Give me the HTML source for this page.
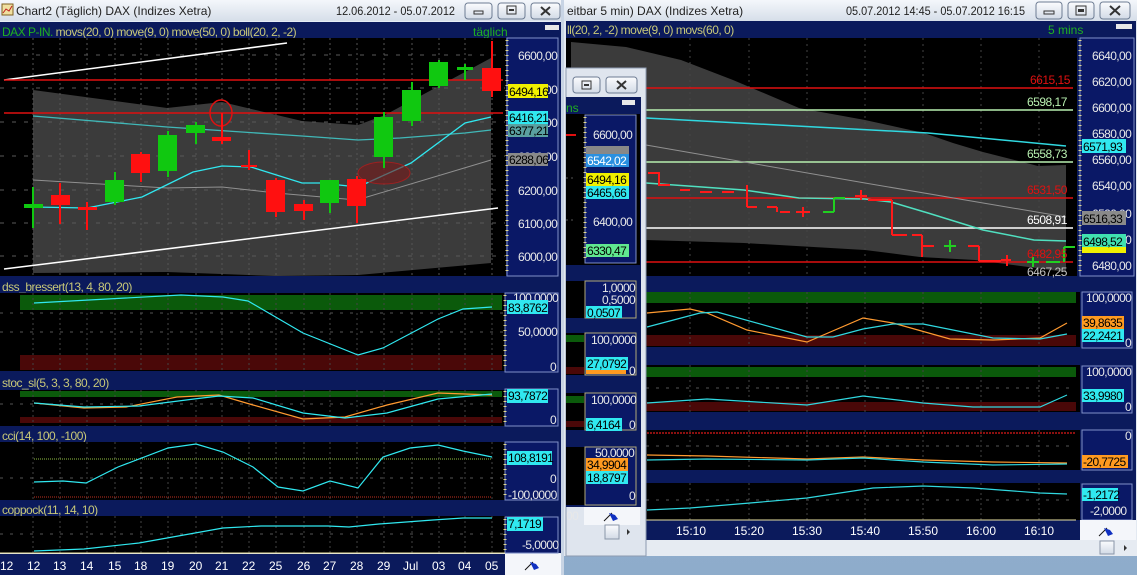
<!DOCTYPE html>
<html><head><meta charset="utf-8"><style>
html,body{margin:0;padding:0;background:#9ab6d4;overflow:hidden}
svg{display:block;font-family:"Liberation Sans",sans-serif}
.ax{font-size:12px;fill:#e8e8e8;letter-spacing:-0.6px}
.bx{font-size:12px;fill:#000;letter-spacing:-0.6px}
.hd{font-size:12px;fill:#c8c878;letter-spacing:-0.5px}
.tt{font-size:12px;fill:#222}
.dt{font-size:12px;fill:#fff}
</style></head><body>
<svg width="1137" height="575" viewBox="0 0 1137 575">
<defs>
<linearGradient id="tb" x1="0" y1="0" x2="0" y2="1"><stop offset="0" stop-color="#f4f7fb"/><stop offset="1" stop-color="#d6dee9"/></linearGradient>
<linearGradient id="bt" x1="0" y1="0" x2="0" y2="1"><stop offset="0" stop-color="#fbfcfe"/><stop offset="1" stop-color="#d2dae6"/></linearGradient>
<linearGradient id="dk" x1="0" y1="0" x2="0" y2="1"><stop offset="0" stop-color="#a8c0da"/><stop offset="1" stop-color="#8eaccb"/></linearGradient>
</defs>
<rect width="1137" height="575" fill="url(#dk)"/>

<!-- ================= RIGHT WINDOW ================= -->
<rect x="563" y="0" width="574" height="556" fill="#e3e9f1"/>
<rect x="563" y="0" width="574" height="21" fill="url(#tb)"/>
<text x="567" y="15" class="tt">eitbar 5 min)  DAX (Indizes Xetra)</text>
<text x="846" y="15" class="tt" textLength="179" lengthAdjust="spacingAndGlyphs">05.07.2012 14:45 - 05.07.2012 16:15</text>
<g stroke="#6d7c93" fill="url(#bt)"><rect x="1036" y="2" width="26" height="17" rx="3"/><rect x="1068" y="2" width="26" height="17" rx="3"/><rect x="1100" y="2" width="30" height="17" rx="3"/></g>
<rect x="1044" y="11" width="10" height="3" fill="none" stroke="#333"/>
<rect x="1076" y="6" width="10" height="9" fill="none" stroke="#333"/><rect x="1078" y="9" width="6" height="3" fill="#333"/>
<path d="M1110 6l10 9M1120 6l-10 9" stroke="#333" stroke-width="2"/>
<rect x="566" y="21" width="570" height="519" fill="#0b1a5c"/>
<text x="567" y="34" class="hd">ll(20, 2, -2) move(9, 0) movs(60, 0)</text>
<text x="1048" y="34" font-size="12" fill="#20b020">5 mins</text>
<rect x="1116" y="24" width="16" height="5" fill="#e8e8e8"/>
<!-- main chart -->
<rect x="566" y="38" width="511" height="238" fill="#000"/>
<path d="M571 42L626 47L681 60L733 80L799 108L865 120L924 133L953 143L983 152L1038 166L1066 165L1066 272L975 260L920 257L865 250L744 243L646 240L571 238Z" fill="#3b3b3b"/>
<g stroke="#444" stroke-dasharray="2,4"><path d="M690 38v238M749 38v238M807 38v238M865 38v238M923 38v238M981 38v238M1039 38v238"/></g>
<path d="M646 88H1073" stroke="#e01010" stroke-width="1.5"/>
<path d="M646 110H1073" stroke="#b8f0b0" stroke-width="1.5"/>
<path d="M646 162H1073" stroke="#b8f0b0" stroke-width="1.5"/>
<path d="M646 198H1073" stroke="#e01010" stroke-width="1.5"/>
<path d="M646 228H1073" stroke="#fff" stroke-width="1.5"/>
<path d="M646 262H1073" stroke="#e01010" stroke-width="1.5"/>
<polyline points="646,118 928,133 1066,146" fill="none" stroke="#30d8e0" stroke-width="1.5"/>
<polyline points="646,145 865,183 1066,217" fill="none" stroke="#909090" stroke-width="1"/>
<polyline points="646,183 744,190 799,198 865,199 891,202 928,213 983,230 1034,240 1066,241" fill="none" stroke="#50e0c0" stroke-width="1.5"/>
<g fill="none" stroke="#ff1a1a" stroke-width="2">
<polyline points="648,173 659,173 659,185 670,185"/><path d="M680 190h10M700 192h12M722 192h12M747 185v22M747 207h10M767 207h10M777 207v5M780 212h10M796 212h14M803 207v10"/>
<path d="M861 190v10M855 196h12M868 200h24M892 200v35M892 235h15M912 235h10M922 235v22M922 246h12M968 246h11M979 246v15M979 261h22M1007 255v11M1001 260h10"/></g>
<g fill="none" stroke="#20d020" stroke-width="2"><path d="M823 212h11M834 212v-14M834 198h11M950 240v12M944 246h12M1027 262h12M1046 262h14M1064 262v-15M1064 247h11M1033 257v10"/></g>
<g font-size="12" letter-spacing="-0.5">
<text x="1030" y="84" fill="#e01010">6615,15</text>
<text x="1027" y="106" fill="#b8f0b0">6598,17</text>
<text x="1027" y="158" fill="#b8f0b0">6558,73</text>
<text x="1027" y="194" fill="#e01010">6531,50</text>
<text x="1027" y="224" fill="#fff">6508,91</text>
<text x="1027" y="258" fill="#e01010">6482,95</text>
<text x="1027" y="276" fill="#c0c0c0">6467,25</text></g>
<!-- right axis -->
<rect x="1080" y="38" width="54" height="238" fill="#0a1866" stroke="#8090c8"/>
<path d="M1080 40V274" stroke="#e0d890" stroke-width="3" stroke-dasharray="1,4"/>
<text x="1092" y="60" class="ax">6640,00</text><text x="1092" y="86" class="ax">6620,00</text><text x="1092" y="112" class="ax">6600,00</text>
<text x="1092" y="138" class="ax">6580,00</text><text x="1092" y="164" class="ax">6560,00</text><text x="1092" y="190" class="ax">6540,00</text>
<text x="1092" y="270" class="ax">6480,00</text><text x="1092" y="244" class="ax">6500,00</text><text x="1092" y="218" class="ax">6520,00</text>
<rect x="1082" y="139" width="44" height="14" fill="#30e8f0"/><text x="1083" y="151" class="bx">6571,93</text>
<rect x="1082" y="211" width="44" height="14" fill="#8a8a8a"/><text x="1083" y="223" class="bx">6516,33</text>
<rect x="1082" y="243" width="44" height="10" fill="#f0f000"/>
<rect x="1082" y="234" width="44" height="13" fill="#40e0b0"/><text x="1083" y="246" class="bx">6498,52</text>

<!-- right lower panels -->
<rect x="566" y="292" width="514" height="55" fill="#000"/>
<rect x="566" y="292" width="510" height="11" fill="#0b5a0b"/><rect x="566" y="335" width="510" height="11" fill="#4a0808"/>
<rect x="566" y="365" width="514" height="47" fill="#000"/>
<rect x="566" y="367" width="510" height="10" fill="#0b5a0b"/><rect x="566" y="402" width="510" height="9" fill="#4a0808"/>
<rect x="566" y="430" width="514" height="40" fill="#000"/>
<path d="M566 433H1076" stroke="#8a1010" stroke-width="2" stroke-dasharray="2,1"/>
<rect x="566" y="483" width="514" height="37" fill="#000"/>
<g stroke="#444" stroke-dasharray="2,3"><path d="M690 292v55M749 292v55M807 292v55M865 292v55M923 292v55M981 292v55M1039 292v55M690 365v47M749 365v47M807 365v47M865 365v47M923 365v47M981 365v47M1039 365v47M690 430v40M749 430v40M807 430v40M865 430v40M923 430v40M981 430v40M1039 430v40M690 483v37M749 483v37M807 483v37M865 483v37M923 483v37M981 483v37M1039 483v37"/></g>
<path d="M566 388H1076M566 446H1076M566 500H1076" stroke="#555" stroke-dasharray="3,7"/>
<polyline points="647,313 690,309 707,313 747,330 807,342 863,318 893,323 950,339 993,340 1040,338 1067,323" fill="none" stroke="#ff9a30" stroke-width="1.2"/>
<polyline points="647,327 700,313 717,312 807,337 833,337 863,329 893,324 923,324 993,338 1040,339 1067,334" fill="none" stroke="#30d8e0" stroke-width="1.2"/>
<polyline points="647,403 707,399 807,405 863,396 923,403 973,407 1040,407 1067,395" fill="none" stroke="#30d8e0" stroke-width="1.2"/>
<polyline points="647,455 707,456 807,459 863,457 923,460 993,462 1067,463" fill="none" stroke="#ff9a30" stroke-width="1.2"/>
<polyline points="647,460 707,459 807,460 863,458 923,462 993,465 1067,464" fill="none" stroke="#30d8e0" stroke-width="1.2"/>
<polyline points="647,510 690,508 750,503 807,498 873,488 923,486 973,488 1040,493 1067,494" fill="none" stroke="#30d8e0" stroke-width="1.2"/>
<g fill="#0a1866" stroke="#8090c8"><rect x="1082" y="292" width="50" height="56"/><rect x="1082" y="366" width="50" height="47"/><rect x="1082" y="430" width="50" height="40"/><rect x="1082" y="484" width="50" height="36"/></g>
<text x="1086" y="302" class="ax">100,0000</text><text x="1125" y="347" class="ax">0</text>
<rect x="1082" y="316" width="42" height="13" fill="#ff9a20"/><text x="1083" y="327" class="bx">39,8635</text>
<rect x="1082" y="329" width="42" height="13" fill="#30e8f0"/><text x="1083" y="340" class="bx">22,2421</text>
<text x="1086" y="376" class="ax">100,0000</text><text x="1125" y="411" class="ax">0</text>
<rect x="1082" y="389" width="42" height="13" fill="#30e8f0"/><text x="1083" y="400" class="bx">33,9980</text>
<text x="1125" y="440" class="ax">0</text>
<rect x="1082" y="455" width="46" height="13" fill="#ff9a20"/><text x="1083" y="466" class="bx">-20,7725</text>
<rect x="1082" y="488" width="36" height="13" fill="#30e8f0"/><text x="1083" y="499" class="bx">-1,2172</text>
<text x="1090" y="515" class="ax">-2,0000</text>
<rect x="566" y="520" width="514" height="20" fill="#0b1a5c"/>
<path d="M566 520H1076" stroke="#e8e0a0"/>
<g class="dt"><text x="676" y="535">15:10</text><text x="734" y="535">15:20</text><text x="792" y="535">15:30</text><text x="850" y="535">15:40</text><text x="908" y="535">15:50</text><text x="966" y="535">16:00</text><text x="1024" y="535">16:10</text></g>
<rect x="1080" y="520" width="56" height="20" fill="#f4f6fa"/>
<path d="M1099 536l8-8" stroke="#111"/><path d="M1104 528l6 2 3 4-5 2z" fill="#1030c0"/>
<rect x="566" y="540" width="571" height="16" fill="#e6ebf2"/>
<rect x="1100" y="541" width="14" height="13" fill="url(#bt)" stroke="#8a96a8"/>
<path d="M1124 545v6l3-3z" fill="#333"/>

<!-- ================= OVERLAY WINDOW ================= -->
<rect x="566" y="68" width="80" height="488" fill="#dfe5ee" stroke="#8c9ab0"/>
<g stroke="#6d7c93" fill="url(#bt)"><rect x="573" y="77" width="27" height="16" rx="3"/><rect x="606" y="77" width="31" height="16" rx="3"/></g>
<rect x="582" y="81" width="9" height="8" fill="none" stroke="#333"/><rect x="584" y="84" width="5" height="2" fill="#333"/>
<path d="M617 81l9 8M626 81l-9 8" stroke="#333" stroke-width="2"/>
<rect x="566" y="97" width="75" height="410" fill="#0b1a5c"/>
<rect x="622" y="100" width="13" height="5" fill="#e8e8e8"/>
<text x="566" y="112" font-size="12" fill="#20b020">ns</text>
<rect x="566" y="114" width="74" height="151" fill="#000"/>
<path d="M566 135h10" stroke="#e01010" stroke-width="2"/>
<path d="M566 178h10M566 220h10" stroke="#555" stroke-dasharray="2,3"/>
<rect x="585" y="115" width="51" height="148" fill="#0a1866" stroke="#8090c8"/>
<path d="M585 117V261" stroke="#e0d890" stroke-width="3" stroke-dasharray="1,4"/>
<text x="593" y="139" class="ax">6600,00</text><text x="593" y="226" class="ax">6400,00</text>
<rect x="586" y="146" width="43" height="12" fill="#888"/>
<rect x="586" y="154" width="43" height="13" fill="#2a90e0"/><text x="587" y="165" class="bx" style="fill:#fff">6542,02</text>
<rect x="586" y="173" width="43" height="13" fill="#f0f000"/><text x="587" y="184" class="bx">6494,16</text>
<rect x="586" y="186" width="43" height="13" fill="#30e8f0"/><text x="587" y="197" class="bx">6465,66</text>
<rect x="586" y="244" width="43" height="13" fill="#60e890"/><text x="587" y="255" class="bx">6330,47</text>
<g fill="#000"><rect x="566" y="281" width="20" height="37"/><rect x="566" y="333" width="20" height="42"/><rect x="566" y="393" width="20" height="37"/><rect x="566" y="447" width="20" height="58"/></g>
<rect x="566" y="335" width="18" height="7" fill="#0b5a0b"/><rect x="566" y="367" width="18" height="7" fill="#4a0808"/>
<rect x="566" y="396" width="18" height="7" fill="#0b5a0b"/><rect x="566" y="421" width="18" height="6" fill="#4a0808"/>
<g fill="#0a1866" stroke="#b0a878"><rect x="585" y="281" width="51" height="37"/><rect x="585" y="333" width="51" height="42"/><rect x="585" y="393" width="51" height="37"/><rect x="585" y="447" width="51" height="58"/></g>
<text x="602" y="292" class="ax">1,0000</text><text x="602" y="304" class="ax">0,5000</text>
<rect x="586" y="306" width="36" height="12" fill="#30e8f0"/><text x="587" y="317" class="bx">0,0507</text>
<text x="591" y="344" class="ax">100,0000</text><text x="629" y="375" class="ax">0</text>
<rect x="586" y="368" width="40" height="6" fill="#ff9a20"/>
<rect x="586" y="357" width="42" height="13" fill="#30e8f0"/><text x="587" y="368" class="bx">27,0792</text>
<text x="591" y="404" class="ax">100,0000</text><text x="629" y="429" class="ax">0</text>
<rect x="586" y="418" width="36" height="13" fill="#30e8f0"/><text x="587" y="429" class="bx">6,4164</text>
<text x="595" y="457" class="ax">50,0000</text>
<rect x="586" y="458" width="42" height="13" fill="#ff9a20"/><text x="587" y="469" class="bx">34,9904</text>
<rect x="586" y="471" width="42" height="13" fill="#30e8f0"/><text x="587" y="482" class="bx">18,8797</text>
<text x="629" y="500" class="ax">0</text>
<text x="566" y="520" class="ax">00</text>
<rect x="584" y="507" width="56" height="18" fill="#f4f6fa"/>
<path d="M604 521l8-8" stroke="#111"/><path d="M609 513l6 2 3 4-5 2z" fill="#1030c0"/>
<rect x="605" y="525" width="14" height="14" fill="url(#bt)" stroke="#8a96a8"/>
<path d="M627 529v6l3-3z" fill="#333"/>

<!-- ================= LEFT WINDOW ================= -->
<rect x="0" y="0" width="564" height="575" fill="#e6edf6"/>
<rect x="0" y="0" width="564" height="21" fill="url(#tb)"/>
<rect x="2" y="4" width="11" height="11" fill="#f0e0a0" stroke="#806020"/><path d="M3 13l3-4 3 2 3-5" stroke="#c02020" fill="none"/>
<text x="16" y="15" class="tt">Chart2 (Täglich)  DAX (Indizes Xetra)</text>
<text x="336" y="15" class="tt" textLength="119" lengthAdjust="spacingAndGlyphs">12.06.2012 - 05.07.2012</text>
<g stroke="#6d7c93" fill="url(#bt)"><rect x="465" y="3" width="27" height="16" rx="3"/><rect x="498" y="3" width="27" height="16" rx="3"/><rect x="531" y="3" width="29" height="16" rx="3"/></g>
<rect x="474" y="11" width="9" height="3" fill="none" stroke="#333"/>
<rect x="507" y="6" width="9" height="8" fill="none" stroke="#333"/><rect x="509" y="9" width="5" height="2" fill="#333"/>
<path d="M541 7l9 8M550 7l-9 8" stroke="#333" stroke-width="2"/>
<rect x="0" y="22" width="561" height="531" fill="#0b1a5c"/>
<text x="2" y="36" font-size="12" letter-spacing="-0.5"><tspan fill="#20b020">DAX P-IN.</tspan><tspan fill="#c8c878"> movs(20, 0) move(9, 0) move(50, 0) boll(20, 2, -2)</tspan></text>
<text x="473" y="36" font-size="12" fill="#20b020">täglich</text>
<rect x="545" y="25" width="14" height="5" fill="#e8e8e8"/>
<rect x="0" y="38" width="506" height="238" fill="#000"/>
<path d="M33 90L167 108L222 102L302 121L358 125L385 115L491 58L491 263L358 275L276 276L167 272L33 273Z" fill="#3b3b3b"/>
<g stroke="#555" stroke-dasharray="2,3"><path d="M33 38v238M60 38v238M87 38v238M115 38v238M141 38v238M168 38v238M196 38v238M222 38v238M249 38v238M276 38v238M304 38v238M330 38v238M357 38v238M384 38v238M412 38v238M439 38v238M465 38v238M492 38v238"/></g>
<path d="M0 55H505M0 88H505M0 122H505M0 156H505M0 190H505M0 223H505M0 256H505" stroke="#5a5a5a" stroke-dasharray="4,8"/>
<path d="M4 80L287 43" stroke="#fff" stroke-width="1.5"/>
<path d="M4 269L498 208" stroke="#fff" stroke-width="1.5"/>
<path d="M4 80H503M4 113H503" stroke="#e01010" stroke-width="1.5"/>
<polyline points="33,180 167,188 222,187 276,193 357,200 491,160" fill="none" stroke="#909090"/>
<polyline points="33,116 167,127 302,136 358,140 400,138 465,133 491,130" fill="none" stroke="#40b8b8" stroke-width="1.3"/>
<polyline points="33,207 87,208 142,197 193,172 222,166 251,167 302,183 320,183 358,187 411,163 465,123 491,117" fill="none" stroke="#30e8f0" stroke-width="1.3"/>
<ellipse cx="384" cy="173" rx="26" ry="11" fill="#7a1a1a" fill-opacity="0.6" stroke="#a02020"/>
<ellipse cx="221" cy="113" rx="11" ry="13" fill="none" stroke="#e01010" stroke-width="1.5"/>
<g stroke="#10c810" stroke-width="2"><path d="M33 187v41M115 172v33M168 131v46M196 122v22M330 180v33M384 112v56M412 82v44M439 60v28M465 64v16"/></g>
<g stroke="#ff1010" stroke-width="2"><path d="M60 183v41M87 202v28M141 152v30M222 113v31M249 150v20M276 178v39M304 200v20M357 176v47M492 41v56"/></g>
<g fill="#10c810"><rect x="24" y="204" width="19" height="4"/><rect x="105" y="180" width="19" height="22"/><rect x="158" y="135" width="19" height="36"/><rect x="186" y="125" width="19" height="8"/><rect x="320" y="180" width="19" height="23"/><rect x="374" y="117" width="19" height="40"/><rect x="402" y="90" width="19" height="31"/><rect x="429" y="62" width="19" height="24"/><rect x="457" y="67" width="16" height="3"/></g>
<g fill="#ff1010"><rect x="51" y="195" width="19" height="10"/><rect x="78" y="207" width="19" height="3"/><rect x="131" y="154" width="19" height="19"/><rect x="212" y="137" width="19" height="4"/><rect x="241" y="165" width="16" height="2"/><rect x="266" y="180" width="19" height="32"/><rect x="294" y="204" width="19" height="7"/><rect x="347" y="179" width="19" height="27"/><rect x="482" y="68" width="19" height="23"/></g>
<!-- left axis -->
<rect x="507" y="38" width="51" height="238" fill="#0a1866" stroke="#8090c8"/>
<path d="M507 40V274" stroke="#e0d890" stroke-width="3" stroke-dasharray="1,4"/>
<text x="518" y="60" class="ax">6600,00</text><text x="518" y="94" class="ax">6500,00</text><text x="518" y="127" class="ax">6400,00</text><text x="518" y="161" class="ax">6300,00</text>
<text x="518" y="195" class="ax">6200,00</text><text x="518" y="228" class="ax">6100,00</text><text x="518" y="261" class="ax">6000,00</text>
<rect x="508" y="84" width="40" height="14" fill="#f0f000"/><text x="509" y="96" class="bx">6494,16</text>
<rect x="508" y="111" width="40" height="13" fill="#30e8f0"/><text x="509" y="122" class="bx">6416,21</text>
<rect x="508" y="124" width="40" height="13" fill="#5aa0a0"/><text x="509" y="135" class="bx">6377,21</text>
<rect x="508" y="153" width="40" height="13" fill="#8a8a8a"/><text x="509" y="164" class="bx">6288,06</text>

<!-- left lower panels -->
<text x="2" y="291" class="hd">dss_bressert(13, 4, 80, 20)</text>
<text x="2" y="387" class="hd">stoc_sl(5, 3, 3, 80, 20)</text>
<text x="2" y="440" class="hd">cci(14, 100, -100)</text>
<text x="2" y="514" class="hd">coppock(11, 14, 10)</text>
<rect x="0" y="293" width="505" height="78" fill="#000"/>
<rect x="20" y="295" width="482" height="15" fill="#0b5a0b"/><rect x="20" y="355" width="482" height="15" fill="#4a0808"/>
<rect x="0" y="390" width="505" height="36" fill="#000"/>
<rect x="20" y="391" width="482" height="6" fill="#0b5a0b"/><rect x="20" y="417" width="482" height="6" fill="#4a0808"/>
<rect x="0" y="442" width="505" height="58" fill="#000"/>
<rect x="0" y="516" width="505" height="37" fill="#000"/>
<g stroke="#444" stroke-dasharray="2,3"><path d="M33 293v78M60 293v78M87 293v78M115 293v78M141 293v78M168 293v78M196 293v78M222 293v78M249 293v78M276 293v78M304 293v78M330 293v78M357 293v78M384 293v78M412 293v78M439 293v78M465 293v78M492 293v78M33 390v36M60 390v36M87 390v36M115 390v36M141 390v36M168 390v36M196 390v36M222 390v36M249 390v36M276 390v36M304 390v36M330 390v36M357 390v36M384 390v36M412 390v36M439 390v36M465 390v36M492 390v36M33 442v58M60 442v58M87 442v58M115 442v58M141 442v58M168 442v58M196 442v58M222 442v58M249 442v58M276 442v58M304 442v58M330 442v58M357 442v58M384 442v58M412 442v58M439 442v58M465 442v58M492 442v58M33 516v37M60 516v37M87 516v37M115 516v37M141 516v37M168 516v37M196 516v37M222 516v37M249 516v37M276 516v37M304 516v37M330 516v37M357 516v37M384 516v37M412 516v37M439 516v37M465 516v37M492 516v37"/></g>
<path d="M0 313H505M0 332H505M0 404H505M0 478H505M0 534H505" stroke="#555" stroke-dasharray="3,7"/>
<path d="M34 459H492" stroke="#90c040" stroke-dasharray="1,1"/>
<path d="M34 497H492" stroke="#c03020" stroke-dasharray="1,1"/>
<polyline points="34,303 181,295 223,297 248,301 303,333 358,355 383,348 438,319 463,309 492,307" fill="none" stroke="#30e8f0" stroke-width="1.2"/>
<polyline points="34,403 84,408 126,407 177,397 219,395 253,405 303,419 345,417 387,405 438,393 492,395" fill="none" stroke="#ff9a30" stroke-width="1.2"/>
<polyline points="34,403 84,407 139,406 194,399 219,396 253,398 303,413 345,418 387,413 438,399 492,394" fill="none" stroke="#30e8f0" stroke-width="1.2"/>
<polyline points="34,482 63,481 86,483 118,467 168,448 196,444 223,452 253,467 278,487 303,491 330,481 358,488 383,457 410,448 438,445 463,451 492,457" fill="none" stroke="#30e8f0" stroke-width="1.2"/>
<polyline points="34,551 84,549 139,543 223,528 261,526 328,526 349,527 379,524 433,520 463,518 492,518" fill="none" stroke="#30e8f0" stroke-width="1.2"/>
<g fill="#0a1866" stroke="#8090c8"><rect x="505" y="293" width="53" height="79"/><rect x="505" y="389" width="53" height="37"/><rect x="505" y="442" width="53" height="58"/><rect x="505" y="517" width="53" height="36"/></g>
<path d="M505 295V370M505 391V424M505 444V498M505 519V551" stroke="#e0d890" stroke-width="3" stroke-dasharray="1,4"/>
<text x="513" y="302" class="ax">100,0000</text><text x="518" y="336" class="ax">50,0000</text><text x="550" y="371" class="ax">0</text>
<rect x="507" y="300" width="41" height="14" fill="#30e8f0"/><text x="508" y="312" class="bx">83,8762</text>
<rect x="507" y="389" width="41" height="14" fill="#30e8f0"/><text x="508" y="400" class="bx">93,7872</text>
<text x="550" y="424" class="ax">0</text>
<rect x="507" y="451" width="45" height="14" fill="#30e8f0"/><text x="508" y="462" class="bx">108,8191</text>
<text x="550" y="483" class="ax">0</text><text x="508" y="499" class="ax">-100,0000</text>
<rect x="507" y="517" width="36" height="14" fill="#30e8f0"/><text x="508" y="528" class="bx">7,1719</text>
<text x="522" y="549" class="ax">-5,0000</text>
<path d="M0 553H505" stroke="#e8e0a0"/>
<rect x="0" y="554" width="505" height="21" fill="#0b1a5c"/>
<g class="dt" font-size="13"><text x="0" y="570">12</text><text x="27" y="570">12</text><text x="53" y="570">13</text><text x="80" y="570">14</text><text x="108" y="570">15</text><text x="134" y="570">18</text><text x="161" y="570">19</text><text x="189" y="570">20</text><text x="215" y="570">21</text><text x="242" y="570">22</text><text x="269" y="570">25</text><text x="297" y="570">26</text><text x="323" y="570">27</text><text x="350" y="570">28</text><text x="377" y="570">29</text><text x="403" y="570">Jul</text><text x="432" y="570">03</text><text x="458" y="570">04</text><text x="485" y="570">05</text></g>
<rect x="505" y="554" width="56" height="21" fill="#f4f6fa"/>
<path d="M525 570l8-8" stroke="#111"/><path d="M530 562l6 2 3 4-5 2z" fill="#1030c0"/>
<rect x="561" y="0" width="3" height="575" fill="#c8d4e4"/>
</svg>
</body></html>
